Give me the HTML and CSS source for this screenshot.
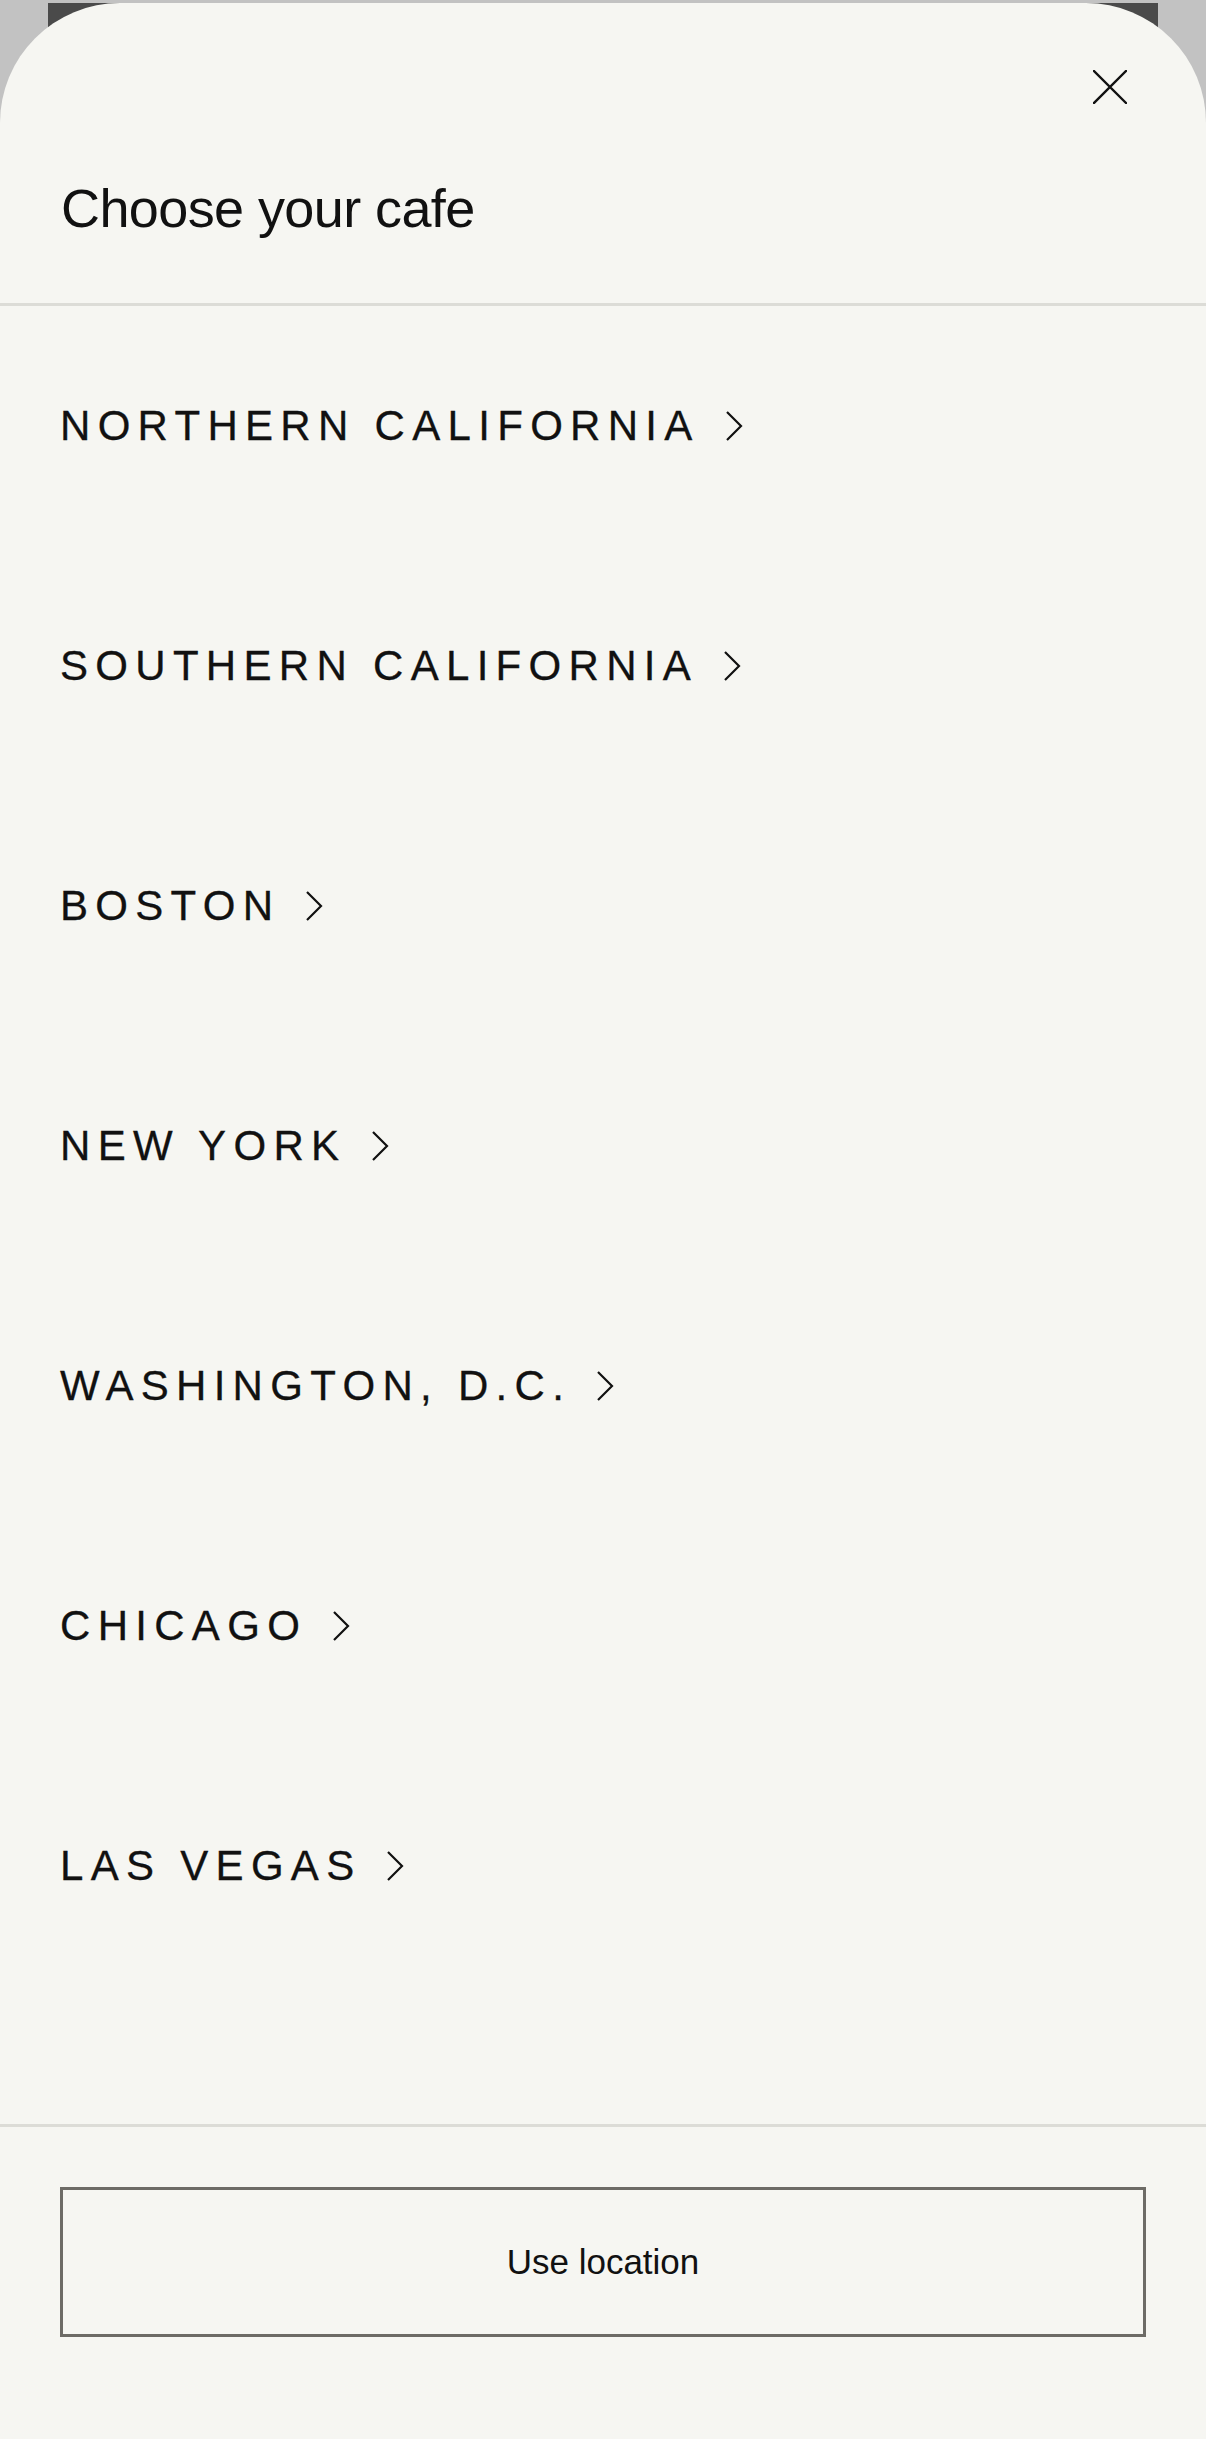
FILE: index.html
```html
<!DOCTYPE html>
<html>
<head>
    <title>Choose your cafe</title>
    <link rel="stylesheet" href="styles.css">
</head>
<body>
    <div class="behind"></div>

    <div class="sheet">
        <div class="sheet-header">
            <div class="close-row">
                <button class="close-btn" aria-label="Close">
                    <svg width="34" height="34" viewBox="0 0 34 34">
                        <path d="M1 1 L33 33 M33 1 L1 33" stroke="#111" stroke-width="2.4" fill="none" stroke-linecap="square"/>
                    </svg>
                </button>
            </div>
            <h1 class="title">Choose your cafe</h1>
        </div>

        <ul class="region-list">
            <li class="region"><span>Northern California</span><svg class="chev" width="18" height="30" viewBox="0 0 18 30"><path d="M2 1 L16 15 L2 29" stroke="#111" stroke-width="2.2" fill="none"/></svg></li>
            <li class="region"><span>Southern California</span><svg class="chev" width="18" height="30" viewBox="0 0 18 30"><path d="M2 1 L16 15 L2 29" stroke="#111" stroke-width="2.2" fill="none"/></svg></li>
            <li class="region"><span>Boston</span><svg class="chev" width="18" height="30" viewBox="0 0 18 30"><path d="M2 1 L16 15 L2 29" stroke="#111" stroke-width="2.2" fill="none"/></svg></li>
            <li class="region"><span>New York</span><svg class="chev" width="18" height="30" viewBox="0 0 18 30"><path d="M2 1 L16 15 L2 29" stroke="#111" stroke-width="2.2" fill="none"/></svg></li>
            <li class="region"><span>Washington, D.C.</span><svg class="chev" width="18" height="30" viewBox="0 0 18 30"><path d="M2 1 L16 15 L2 29" stroke="#111" stroke-width="2.2" fill="none"/></svg></li>
            <li class="region"><span>Chicago</span><svg class="chev" width="18" height="30" viewBox="0 0 18 30"><path d="M2 1 L16 15 L2 29" stroke="#111" stroke-width="2.2" fill="none"/></svg></li>
            <li class="region"><span>Las Vegas</span><svg class="chev" width="18" height="30" viewBox="0 0 18 30"><path d="M2 1 L16 15 L2 29" stroke="#111" stroke-width="2.2" fill="none"/></svg></li>
        </ul>

        <div class="sheet-footer">
            <button class="location-btn">Use location</button>
        </div>
    </div>
</body>
</html>
```

FILE: styles.css
```css
html, body {
    margin: 0;
    padding: 0;
}
body {
    background: #c2c2c2;
    font-family: "Liberation Sans", Arial, sans-serif;
    color: #111;
    padding-top: 3px;
    position: relative;
}
.behind {
    position: absolute;
    top: 3px;
    left: 48px;
    right: 48px;
    height: 200px;
    background: #4a4a4a;
}
.sheet {
    position: relative;
    background: #f6f6f2;
    border-radius: 120px 120px 0 0;
    height: 2436px;
    display: flex;
    flex-direction: column;
}
.sheet-header {
    padding: 67px 79px 0 61px;
    height: 233px;
    border-bottom: 3px solid #dcdcd7;
}
.close-row {
    display: flex;
    justify-content: flex-end;
    height: 34px;
}
.close-btn {
    background: none;
    border: none;
    padding: 0;
    width: 34px;
    height: 34px;
    cursor: pointer;
}
.close-btn svg { display: block; }
.title {
    margin: 73px 0 0;
    font-size: 54px;
    font-weight: normal;
    line-height: 62px;
    letter-spacing: -0.6px;
}
.region-list {
    list-style: none;
    margin: 0;
    padding: 0 60px;
    flex: 1;
}
.region {
    height: 240px;
    display: flex;
    align-items: center;
    font-size: 42px;
    line-height: 1;
    text-transform: uppercase;
    letter-spacing: 7.3px;
    cursor: pointer;
    -webkit-text-stroke: 0.3px #111;
}
.chev {
    margin-left: 25px;
    flex: none;
}
.sheet-footer {
    border-top: 3px solid #dcdcd7;
    padding: 60px 60px 102px;
}
.location-btn {
    display: block;
    width: 100%;
    height: 150px;
    background: none;
    border: 3px solid #6d6b66;
    font-family: "Liberation Sans", Arial, sans-serif;
    font-size: 35px;
    color: #111;
    cursor: pointer;
}
```
